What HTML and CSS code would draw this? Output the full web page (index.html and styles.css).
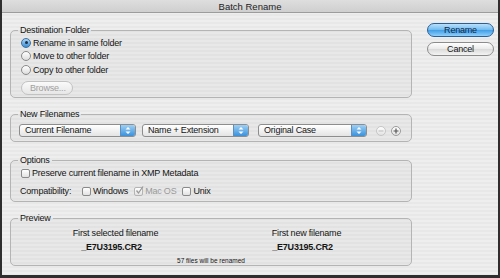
FILE: index.html
```html
<!DOCTYPE html>
<html lang="en">
<head>
    <meta charset="UTF-8">
    <title>Batch Rename</title>
    <link rel="stylesheet" href="styles.css">
</head>
<body>
    <div class="window">
        <div class="titlebar">Batch Rename</div>
        <div class="body">
            <div class="main">
                <fieldset class="group dest">
                    <legend>Destination Folder</legend>
                    <div class="row"><span class="radio on"></span>Rename in same folder</div>
                    <div class="row"><span class="radio"></span>Move to other folder</div>
                    <div class="row"><span class="radio"></span>Copy to other folder</div>
                    <div class="push disabled">Browse...</div>
                </fieldset>

                <fieldset class="group names">
                    <legend>New Filenames</legend>
                    <div class="popup-row">
                        <div class="popup first">
                            <span class="popup-label">Current Filename</span>
                            <span class="arrows"><svg width="6" height="9" viewBox="0 0 6 9"><path d="M0.5 3.5 L3 1 L5.5 3.5 Z M0.5 5.5 L3 8 L5.5 5.5 Z" fill="#fff"/></svg></span>
                        </div>
                        <div class="popup second">
                            <span class="popup-label">Name + Extension</span>
                            <span class="arrows"><svg width="6" height="9" viewBox="0 0 6 9"><path d="M0.5 3.5 L3 1 L5.5 3.5 Z M0.5 5.5 L3 8 L5.5 5.5 Z" fill="#fff"/></svg></span>
                        </div>
                        <div class="popup third">
                            <span class="popup-label">Original Case</span>
                            <span class="arrows"><svg width="6" height="9" viewBox="0 0 6 9"><path d="M0.5 3.5 L3 1 L5.5 3.5 Z M0.5 5.5 L3 8 L5.5 5.5 Z" fill="#fff"/></svg></span>
                        </div>
                        <span class="round minus"><svg width="10" height="10" viewBox="0 0 10 10"><path d="M2.5 5 H7.5" stroke="#c4c4c4" stroke-width="1.2"/></svg></span>
                        <span class="round plus"><svg width="10" height="10" viewBox="0 0 10 10"><path d="M2.5 5 H7.5 M5 2.5 V7.5" stroke="#555" stroke-width="1.2"/></svg></span>
                    </div>
                </fieldset>

                <fieldset class="group options">
                    <legend>Options</legend>
                    <div class="row"><span class="check"></span>Preserve current filename in XMP Metadata</div>
                    <div class="row compat">
                        <span class="compat-label">Compatibility:</span>
                        <span class="check"></span><span class="opt">Windows</span>
                        <span class="check checked"><svg width="9" height="9" viewBox="0 0 9 9"><path d="M1.5 4.5 L3.5 7 L8 0.5" stroke="#9a9a9a" stroke-width="1.3" fill="none"/></svg></span><span class="opt grey">Mac OS</span>
                        <span class="check"></span><span class="opt">Unix</span>
                    </div>
                </fieldset>

                <fieldset class="group preview">
                    <legend>Preview</legend>
                    <div class="preview-cols">
                        <div class="preview-col">
                            <div class="preview-label">First selected filename</div>
                            <div class="preview-name">_E7U3195.CR2</div>
                        </div>
                        <div class="preview-col">
                            <div class="preview-label">First new filename</div>
                            <div class="preview-name">_E7U3195.CR2</div>
                        </div>
                    </div>
                    <div class="count">57 files will be renamed</div>
                </fieldset>
            </div>
            <div class="side">
                <div class="aqua default">Rename</div>
                <div class="aqua">Cancel</div>
            </div>
        </div>
    </div>
</body>
</html>
```

FILE: styles.css
```css
body {
    margin: 0;
    background-color: #2e2e2e;
    font-family: 'Liberation Sans', Arial, sans-serif;
    font-size: 9px;
    letter-spacing: -0.2px;
    color: #141414;
}
.window {
    margin: 0 2px 0 2px;
    height: 275px;
    background-color: #ececec;
    background-image: repeating-linear-gradient(to bottom, #eeeeee 0, #eeeeee 2px, #e8e8e8 2px, #e8e8e8 4px);
    overflow: hidden;
}
.titlebar {
    height: 12px;
    line-height: 13px;
    text-align: center;
    font-size: 9.5px;
    letter-spacing: 0;
    color: #222;
    background: linear-gradient(to bottom, #dedede, #cfcfcf);
    border-bottom: 1px solid #9c9c9c;
}
.body {
    display: flex;
    padding: 10px 4px 0 8px;
}
.main {
    width: 402px;
    padding-top: 2px;
}
.side {
    display: flex;
    flex-direction: column;
    gap: 5px;
    margin-left: 15px;
    width: 67px;
}
.group {
    margin: 0;
    padding: 0 9px;
    border: 1px solid #b4b4b4;
    border-radius: 5px;
    background: rgba(0, 0, 0, 0.025);
}
.group legend {
    padding: 0 2px;
    margin-left: -2px;
    line-height: 10px;
    height: 10px;
}
.dest {
    padding-top: 1px;
    padding-bottom: 2px;
}
.names {
    margin-top: 11px;
    padding-top: 5px;
    padding-bottom: 4px;
}
.options {
    margin-top: 13px;
    padding-top: 1px;
    padding-bottom: 3px;
}
.preview {
    margin-top: 11px;
    padding-top: 4px;
    padding-bottom: 0;
}
.row {
    display: flex;
    align-items: center;
    height: 13.5px;
}
.options .row {
    height: 14px;
}
.options .compat {
    margin-top: 4px;
}
.radio {
    width: 8px;
    height: 8px;
    margin: 0 2px 0 1px;
    border: 1px solid #8a8a8a;
    border-radius: 50%;
    background: linear-gradient(to bottom, #ffffff, #dcdcdc);
    position: relative;
}
.radio.on {
    border-color: #3d6f9f;
    background: linear-gradient(to bottom, #a9d4f5, #3b8fd8);
}
.radio.on::after {
    content: '';
    position: absolute;
    left: 2.5px;
    top: 2.5px;
    width: 3px;
    height: 3px;
    border-radius: 50%;
    background: #1e2f44;
}
.push {
    margin: 4.5px 0 0 1px;
    height: 12px;
    line-height: 12px;
    padding-left: 8px;
    width: 42px;
    border: 1px solid #c2c2c2;
    border-radius: 7px;
    background: linear-gradient(to bottom, #fafafa, #e6e6e6);
}
.push.disabled {
    color: #a0a0a0;
}
.popup-row {
    display: flex;
    align-items: center;
}
.popup {
    display: flex;
    align-items: center;
    height: 11px;
    border: 1px solid #8d8d8d;
    border-radius: 3px;
    background: linear-gradient(to bottom, #ffffff, #e4e4e4);
    overflow: hidden;
}
.popup-label {
    flex: 1;
    padding-left: 5px;
    line-height: 11px;
}
.arrows {
    display: flex;
    align-items: center;
    justify-content: center;
    width: 14px;
    height: 11px;
    border-left: 1px solid #5b8fc0;
    background: linear-gradient(to bottom, #9ed0f4, #3a91dc);
}
.popup.first {
    width: 115px;
    margin-left: -1px;
}
.popup.second {
    width: 105px;
    margin-left: 6px;
}
.popup.third {
    width: 107px;
    margin-left: 9px;
}
.round {
    display: flex;
    width: 10px;
    height: 10px;
    border-radius: 50%;
    box-sizing: border-box;
    border: 1px solid #9c9c9c;
    background: linear-gradient(to bottom, #ffffff, #e2e2e2);
    align-items: center;
    justify-content: center;
}
.round svg {
    flex: none;
}
.round.minus {
    margin-left: 9px;
    border-color: #c6c6c6;
}
.round.plus {
    margin-left: 5px;
}
.check {
    display: inline-flex;
    width: 7px;
    height: 7px;
    margin: 0 2px 0 1px;
    border: 1px solid #8a8a8a;
    border-radius: 2px;
    background: linear-gradient(to bottom, #ffffff, #e2e2e2);
    position: relative;
}
.check.checked {
    border-color: #b4b4b4;
}
.check.checked svg {
    position: absolute;
    left: 0;
    top: -2px;
}
.compat-label {
    width: 61px;
}
.opt {
    margin-right: 5px;
}
.opt.grey {
    color: #9a9a9a;
}
.preview-cols {
    display: flex;
}
.preview-col {
    flex: 1;
    text-align: center;
}
.preview-label {
    line-height: 12px;
}
.preview-name {
    margin-top: 2px;
    line-height: 13px;
    font-weight: bold;
    padding-right: 8px;
}
.count {
    margin-top: 2px;
    text-align: center;
    font-size: 6.5px;
    letter-spacing: 0;
    line-height: 9px;
}
.aqua {
    height: 12px;
    line-height: 12px;
    text-align: center;
    border: 1px solid #8c8c8c;
    border-radius: 7px;
    background: linear-gradient(to bottom, #ffffff 0%, #eaeaea 50%, #dadada 51%, #f4f4f4 100%);
}
.aqua.default {
    border-color: #2b5f97;
    color: #10284a;
    background: linear-gradient(to bottom, #b9e0fb 0%, #6fbaf0 50%, #3f9de6 51%, #8fd0fb 100%);
}
```
